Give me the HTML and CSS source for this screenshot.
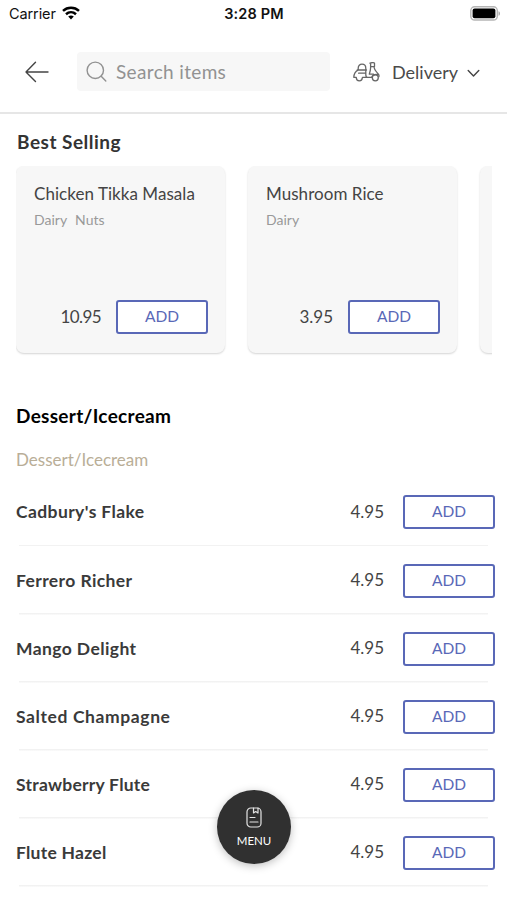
FILE: index.html
```html
<!DOCTYPE html>
<html lang="en">
<head>
<meta charset="utf-8">
<title>Menu</title>
<link rel="stylesheet" href="styles.css">
</head>
<body>
<div class="statusbar">
  <div class="carrier"><span>Carrier</span>
    <svg class="wifi" width="18" height="14" viewBox="0 0 18 14" fill="none" stroke="#000" stroke-width="2.5"><path d="M1 4.900C5.600 .7 12.400 .7 17 4.900M4 8.300c2.900-2.600 7.100-2.600 10 0"/><path d="M6.200 10.600c1.700-1.400 3.900-1.400 5.600 0L9 13.600z" fill="#000" stroke="none"/></svg>
  </div>
  <span class="clock">3:28 PM</span>
  <svg class="battery" width="31" height="15" viewBox="0 0 31 15"><rect x=".8" y=".8" width="26.500" height="13.200" rx="3.800" fill="#fff" stroke="#b5b5b5" stroke-width="1.400"/><rect x="2.600" y="2.500" width="22.800" height="9.800" rx="2" fill="#000"/><path d="M28.500 5.200c2 .7 2 3.900 0 4.600z" fill="#aaa"/></svg>
</div>
<header class="toolbar">
  <svg class="back" width="24" height="22" viewBox="0 0 24 22" fill="none" stroke="#444" stroke-width="1.400" stroke-linecap="round" stroke-linejoin="round"><path d="M23 11H1M10.500 1.200L1 11l9.500 9.600"/></svg>
  <div class="search">
    <svg width="21" height="21" viewBox="0 0 21 21" fill="none" stroke="#929292" stroke-width="1.400" stroke-linecap="round"><circle cx="9.300" cy="9.300" r="8.200"/><path d="M15.200 15.200l4.600 4.800"/></svg>
    <span>Search items</span>
  </div>
  <div class="mode">
    <svg width="27" height="20" viewBox="0 0 27 20" fill="none" stroke="#666" stroke-width="1.300" stroke-linecap="round" stroke-linejoin="round"><path d="M5.200 8V6.200C5.200 3.800 6.800 2.200 9 2.200s3.800 1.600 3.800 4V8M4.200 8h9.300M5 8.200C2.600 9.400 1 12 .8 15.300h2.500M5.600 11.200h7.200M12.800 8.200v4.200c0 1.500.6 2.900 1.800 2.900h4.100M9.500 15.300h5.100"/><path d="M3.300 15.800a3 3 0 0 0 6 0"/><path d="M17 1.200c1.700-.8 3.300-.7 4.500-.2v3.600h-3.800M17.600 1.600v4.200c0 2.300-.6 4.200-1.300 6.300h4.200M21 4.800c.3 3.100 2.100 5 4.400 7.300.6.800.7 1.600.5 2.400M18.700 15.300c.4-2.200 3.200-3.500 6.500-2.600"/><circle cx="22.300" cy="15.800" r="3"/></svg>
    <span>Delivery</span>
    <svg class="chevron" width="13" height="9" viewBox="0 0 13 9" fill="none" stroke="#444" stroke-width="1.400" stroke-linecap="round" stroke-linejoin="round"><path d="M1.200 1.500l5.300 5.500 5.300-5.500"/></svg>
  </div>
</header>
<main>
  <h2 class="best">Best Selling</h2>
  <div class="cards">
    <article class="card">
      <h3>Chicken Tikka Masala</h3>
      <p class="tags"><span>Dairy</span><span>Nuts</span></p>
      <div class="buy"><span class="price tight">10.95</span><button class="add">ADD</button></div>
    </article>
    <article class="card">
      <h3>Mushroom Rice</h3>
      <p class="tags"><span>Dairy</span></p>
      <div class="buy"><span class="price">3.95</span><button class="add">ADD</button></div>
    </article>
    <article class="card"></article>
  </div>
  <h2 class="category">Dessert/Icecream</h2>
  <p class="subcategory">Dessert/Icecream</p>
  <ul class="items">
    <li><span class="name">Cadbury's Flake</span><span class="price">4.95</span><button class="add">ADD</button></li>
    <li><span class="name">Ferrero Richer</span><span class="price">4.95</span><button class="add">ADD</button></li>
    <li><span class="name">Mango Delight</span><span class="price">4.95</span><button class="add">ADD</button></li>
    <li><span class="name wide">Salted Champagne</span><span class="price">4.95</span><button class="add">ADD</button></li>
    <li><span class="name snug">Strawberry Flute</span><span class="price">4.95</span><button class="add">ADD</button></li>
    <li><span class="name snug">Flute Hazel</span><span class="price">4.95</span><button class="add">ADD</button></li>
  </ul>
</main>
<div class="menu">
  <svg width="16" height="21" viewBox="0 0 16 21" fill="none" stroke="#e4e4e4" stroke-width="1.200" stroke-linecap="round" stroke-linejoin="round"><rect x="1" y="1" width="14" height="19" rx="3.800"/><path d="M7.500 1v5l2.200-1.500L12 6V1M4 10.500h5M4 15h8"/></svg>
  <span>MENU</span>
</div>
</body>
</html>
```

FILE: styles.css
```css
* { box-sizing: border-box; }
body { margin: 0; height: 900px; overflow: hidden; background: #fff; color: #333; font-family: Lato, "Liberation Sans", sans-serif; }
h2, h3, p, ul { margin: 0; padding: 0; }
.statusbar { height: 28px; display: grid; grid-template-columns: 1fr auto 1fr; align-items: center; padding: 0 7px 0 9px; font: 14.5px/28px Inter, sans-serif; color: #111; }
.carrier { display: flex; align-items: center; gap: 6px; letter-spacing: -.1px; }
.wifi { margin-top: -3px; }
.clock { font-weight: 600; font-size: 14.5px; letter-spacing: .15px; margin-left: -1px; }
.battery { justify-self: end; margin: -1px -1px 0 0; }
.toolbar { height: 86px; display: flex; align-items: center; padding: 3px 27px 0 25px; border-bottom: 2px solid #e6e6e6; }
.back { flex: none; }
.search { flex: none; width: 253px; height: 39px; margin-left: 28px; padding: 0 0 1px 9px; border-radius: 4px; background: #f7f7f7; display: flex; align-items: center; gap: 9px; color: #929292; font-size: 19px; letter-spacing: .35px; }
.mode { flex: 1; display: flex; align-items: center; margin-left: 23px; font-size: 18px; color: #4a4a4a; letter-spacing: 0; }
.mode span { margin-left: 12px; }
.chevron { margin-left: auto; margin-top: 4px; }
.best { margin: 16px 0 0 17px; font-size: 19px; line-height: 24px; font-weight: 700; letter-spacing: .5px; }
.cards { display: flex; gap: 23px; margin: 12px 15px 0 16px; height: 190px; overflow: hidden; }
.card { flex: none; width: 209px; height: 187px; padding: 17px 17px 19px 18px; display: flex; flex-direction: column; border-radius: 8px; background: #f7f7f7; box-shadow: 0 1px 2px #d4d4d4; }
.card h3 { font-size: 17px; line-height: 22px; font-weight: 400; color: #444; letter-spacing: .05px; }
.tags { display: flex; gap: 8px; margin-top: 5px; font-size: 14px; line-height: 20px; color: #999; }
.buy { display: flex; justify-content: flex-end; align-items: center; margin-top: auto; }
.price { font-size: 17px; color: #444; margin: -2px 15px 0 0; }
.tight { letter-spacing: -.6px; }
.add { width: 92px; height: 34px; flex: none; padding: 0 0 2px; border: 2px solid #5968b7; border-radius: 3px; background: #fff; color: #5968b7; font: 15.5px Lato, sans-serif; }
.category { margin: 47px 0 0 16px; font-size: 19px; line-height: 26px; color: #000; font-weight: 700; letter-spacing: .3px; }
.subcategory { margin: 19px 0 0 16px; font-size: 17px; line-height: 24px; color: #b9ae97; }
.items { list-style: none; margin-top: 6.4px; }
.items li { height: 68.1px; display: flex; align-items: center; padding: 0 12px 0 16px; background: linear-gradient(#f2f2f2, #f2f2f2) 19px 100% / 469px 1.500px no-repeat; }
.name { flex: 1; margin-top: -1px; font-size: 17.5px; font-weight: 700; color: #3a3a3a; letter-spacing: .4px; }
.wide { letter-spacing: .6px; }
.snug { letter-spacing: .25px; }
.items .price { margin-right: 19px; }
.menu { position: absolute; left: 217px; top: 790px; width: 74px; height: 74px; border-radius: 50%; background: #303030; box-shadow: 0 2px 8px rgba(0,0,0,.25); color: #fff; display: flex; flex-direction: column; align-items: center; padding-top: 17px; gap: 5px; font-size: 11.5px; line-height: 16px; }
```
